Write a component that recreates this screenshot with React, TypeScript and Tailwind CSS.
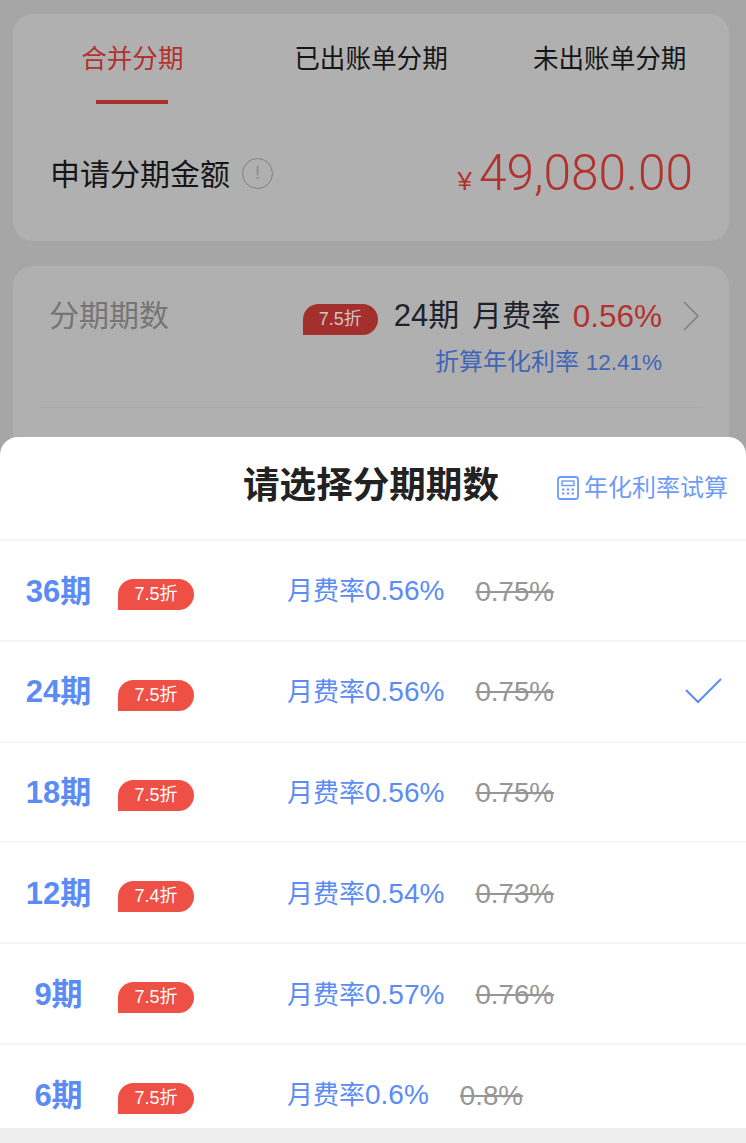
import React from 'react';

interface Term {
  label: string;
  discount: string;
  rate: string;
  original: string;
  selected?: boolean;
}

const terms: Term[] = [
  { label: '36期', discount: '7.5折', rate: '0.56%', original: '0.75%' },
  { label: '24期', discount: '7.5折', rate: '0.56%', original: '0.75%', selected: true },
  { label: '18期', discount: '7.5折', rate: '0.56%', original: '0.75%' },
  { label: '12期', discount: '7.4折', rate: '0.54%', original: '0.73%' },
  { label: '9期', discount: '7.5折', rate: '0.57%', original: '0.76%' },
  { label: '6期', discount: '7.5折', rate: '0.6%', original: '0.8%' },
];

const tabs = ['合并分期', '已出账单分期', '未出账单分期'];

const CalculatorIcon = () => (
  <svg width="22" height="24" viewBox="0 0 22 24" fill="none" stroke="#6f9bf5" className="shrink-0">
    <rect x="1" y="1" width="20" height="22" rx="2.5" strokeWidth="1.8" />
    <rect x="5" y="5" width="12" height="4.5" strokeWidth="1.4" />
    <g fill="#6f9bf5" stroke="none">
      <rect x="5" y="12.5" width="2.4" height="2" />
      <rect x="9.8" y="12.5" width="2.4" height="2" />
      <rect x="14.6" y="12.5" width="2.4" height="2" />
      <rect x="5" y="16.5" width="2.4" height="2" />
      <rect x="9.8" y="16.5" width="2.4" height="2" />
      <rect x="14.6" y="16.5" width="2.4" height="2" />
    </g>
  </svg>
);

export default function App() {
  return (
    <div className="relative h-[1143px] w-[746px] overflow-hidden bg-[#a6a6a6] pl-[13px] pr-[17px] pt-[14px] font-['Liberation_Sans','Noto_Sans_CJK_SC',sans-serif]">
      {/* Amount card */}
      <div className="h-[227px] rounded-[20px] bg-[#b0b0b0]">
        <div className="grid h-[90px] grid-cols-3">
          {tabs.map((t, i) => (
            <div key={t} className="flex flex-col items-center justify-between pt-[27px]">
              <span className={`text-[25.6px] leading-[36px] ${i === 0 ? 'text-[#b2322e]' : 'text-[#161616]'}`}>{t}</span>
              {i === 0 && <span className="h-[4px] w-[72px] bg-[#ab2f2b]" />}
            </div>
          ))}
        </div>
        <div className="mt-[42px] flex items-center justify-between pl-[37px] pr-[36px]">
          <div className="flex items-center">
            <span className="pt-[2px] text-[30px] leading-[52px] text-[#161616]">申请分期金额</span>
            <span className="ml-[12px] flex h-[31px] w-[31px] items-center justify-center rounded-full border border-[#808080] text-[18px] text-[#8a8a8a]">!</span>
          </div>
          <div className="flex items-baseline text-[#b2322e]">
            <span className="mr-[7px] text-[26px]">¥</span>
            <span className="font-['Roboto',sans-serif] text-[49.6px] font-light leading-[54px]">49,080.00</span>
          </div>
        </div>
      </div>

      {/* Term card, runs on behind the sheet */}
      <div className="mt-[25px] h-[400px] rounded-[20px] bg-[#b0b0b0] pl-[27px] pr-[26px] pt-[30px]">
        <div className="flex items-center justify-between pr-[3px]">
          <span className="pl-[9px] text-[30px] leading-[40px] text-[#757575]">分期期数</span>
          <div className="flex items-center">
            <span className="mt-[6px] flex h-[31px] w-[75px] items-center justify-center rounded-[16px] rounded-bl-none bg-[#a3302c] text-[18px] text-[#d0c4c3]">7.5折</span>
            <span className="ml-[16px] text-[31px] leading-[40px] text-[#20222b]">24期</span>
            <span className="ml-[13px] text-[29.5px] leading-[40px] text-[#20222b]">月费率</span>
            <span className="ml-[12px] text-[31.5px] leading-[40px] text-[#b2322e]">0.56%</span>
            <svg width="18" height="30" viewBox="0 0 18 30" fill="none" stroke="#808080" strokeWidth="1.5" className="ml-[20px]">
              <path d="M2 1 L16 15 L2 29" />
            </svg>
          </div>
        </div>
        <div className="mt-[10px] pr-[41px] text-right text-[24px] leading-[32px] text-[#4166b5]">
          折算年化利率 <span className="text-[22.5px]">12.41%</span>
        </div>
        <div className="mt-[28px] h-px bg-[#a8a8a8]" />
      </div>

      {/* Bottom sheet */}
      <div className="absolute inset-x-0 bottom-0 top-[437px] flex flex-col rounded-t-[18px] bg-white">
        <div className="relative flex h-[102px] shrink-0 items-center justify-center pb-[5px] pr-[4px]">
          <span className="text-[36.6px] font-bold leading-[48px] text-[#222222]">请选择分期期数</span>
          <div className="absolute right-[18px] top-[39px] flex items-center gap-[5px] text-[24px] leading-[24px] text-[#6f9bf5]">
            <CalculatorIcon />
            <span>年化利率试算</span>
          </div>
        </div>
        <div className="flex-1 overflow-hidden">
          {terms.map(term => (
            <div key={term.label} className="flex h-[100.8px] items-center border-t-2 border-[#f5f5f5]">
              <span className="mt-[3px] w-[118px] pr-[1px] text-center text-[31px] font-bold text-[#5b8cf5]">{term.label}</span>
              <span className="mt-[8px] flex h-[31px] w-[76px] items-center justify-center rounded-[16px] rounded-bl-none bg-[#ef5046] text-[18px] text-white">{term.discount}</span>
              <span className="ml-[93px] mt-[2px] flex items-baseline text-[#5b8cf5]">
                <span className="text-[26px]">月费率</span>
                <span className="text-[28px]">{term.rate}</span>
              </span>
              <span className="ml-[31px] mt-[2px] text-[27.7px] text-[#969696] line-through">{term.original}</span>
              {term.selected && (
                <svg width="38" height="26" viewBox="0 0 38 26" fill="none" stroke="#5b8cf5" strokeWidth="2" className="ml-auto mr-[23px]">
                  <path d="M1 12 L13 24 L36 1" />
                </svg>
              )}
            </div>
          ))}
        </div>
        <div className="h-[15px] shrink-0 bg-[#ededed]" />
      </div>
    </div>
  );
}
